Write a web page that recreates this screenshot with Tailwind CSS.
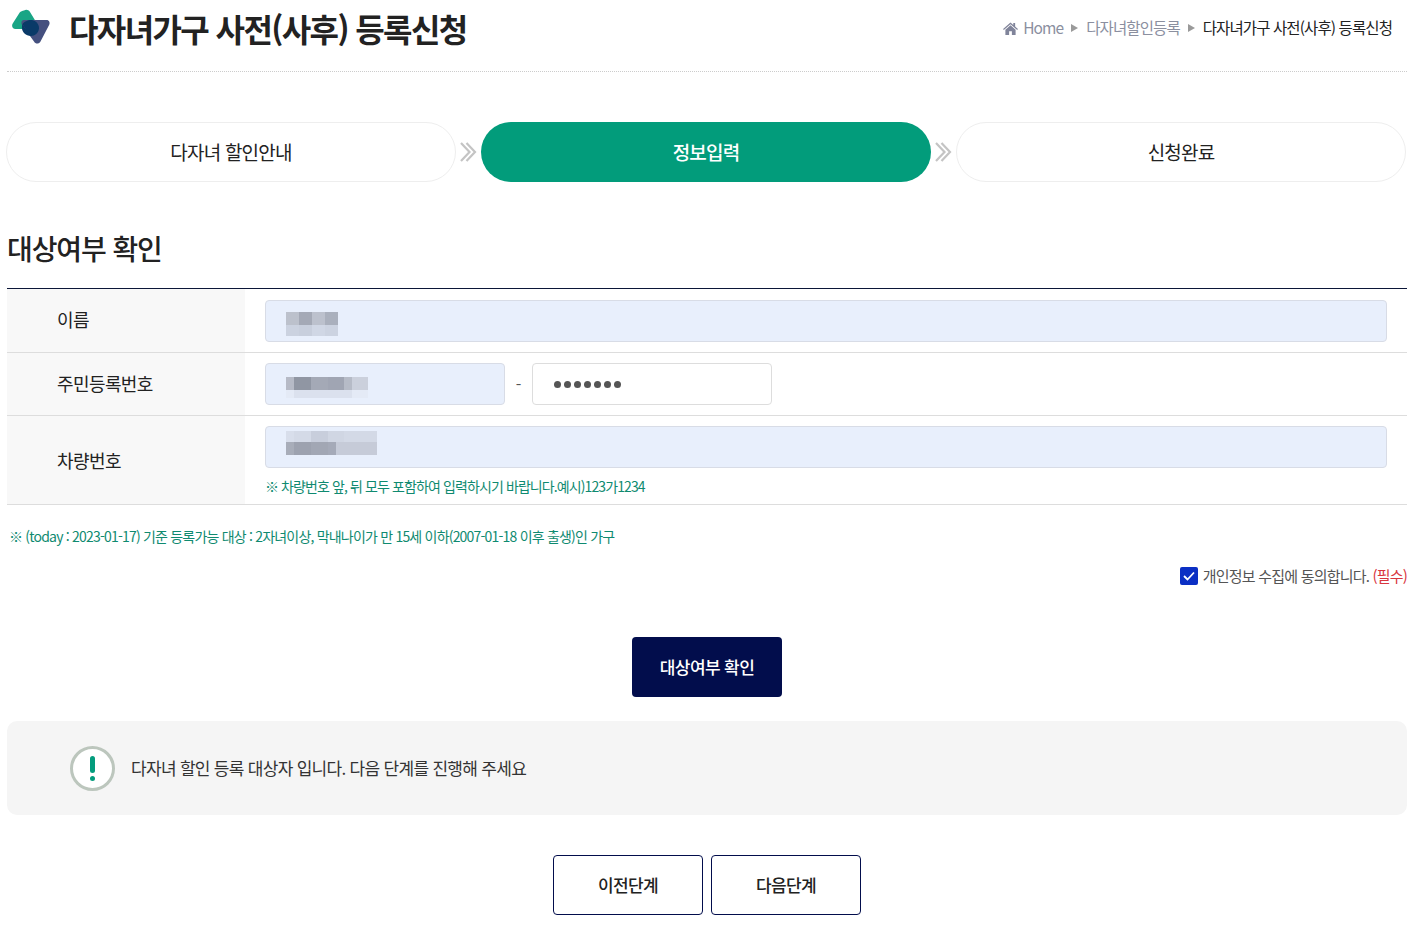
<!DOCTYPE html>
<html lang="ko">
<head>
  <meta charset="utf-8" />
  <title>다자녀가구 사전(사후) 등록신청</title>
  <script src="https://cdn.jsdelivr.net/npm/@tailwindcss/browser@4"></script>
</head>
<body class="bg-white text-[#222] font-['Noto_Sans_CJK_KR','Noto_Sans',sans-serif] overflow-hidden">
  <div class="w-[1414px] h-[926px] overflow-hidden px-[7px]">
    <!-- Header -->
    <header class="h-[72px] border-b border-dotted border-[#ccc] flex items-start justify-between">
      <div class="flex items-center h-[56px]">
        <svg class="ml-[4px] w-[40px] h-[38px]" viewBox="0 0 40 38">
          <path d="M13 1.5c2-1.6 4.5-.8 5.700 1l7 11.500c1.700 3 .3 6-3.200 6H4.500C1.500 20 .3 17 1.700 14.500l7-11c1-1.200 2.800-1.500 4.300-2z" fill="#19a585"/>
          <path d="M13 11h22.500c2.800 0 3.800 2.800 2.600 5l-8.600 16.500c-1.600 2.800-5 2.800-6.500 0l-12-16.500C9.800 13.500 10.500 11 13 11z" fill="#45507f"/>
          <path d="M21 11c4 .7 7 4 7 8 0 .4 0 .7-.1 1H14.500L11.500 15c1.500-2.400 6-4.500 9.500-4z" fill="#0a3a68"/>
          <path d="M11.500 15l3 5h13.400c-.5 4.100-4 7-8 7-5 0-9-4-9-8.500 0-1.300.2-2.500.6-3.500z" fill="#0a3a68"/>
        </svg>
        <h1 class="ml-[18px] text-[32px] leading-[56px] font-bold tracking-[-1.6px] text-[#222]">다자녀가구 사전(사후) 등록신청</h1>
      </div>
      <nav class="flex items-center h-[56px] pr-[15px] text-[15.500px] tracking-[-0.9px] text-[#8b8f9f]">
        <svg class="w-[15px] h-[13px] mr-[5px]" viewBox="0 0 16 14" fill="#80849a">
          <path d="M8 0.500 0 7.500l.8 1L8 2.300l7.200 6.200.8-1-3-2.600V1h-2v2.200z"/>
          <path d="M8 3.500 2.500 8.300V14h4v-4h3v4h4V8.300z"/>
        </svg>
        <span>Home</span>
        <span class="mx-[8px] w-0 h-0 border-y-[4px] border-y-transparent border-l-[7px] border-l-[#9a9a9a]"></span>
        <span>다자녀할인등록</span>
        <span class="mx-[8px] w-0 h-0 border-y-[4px] border-y-transparent border-l-[7px] border-l-[#9a9a9a]"></span>
        <span class="text-[#222]">다자녀가구 사전(사후) 등록신청</span>
      </nav>
    </header>

    <!-- Steps -->
    <div class="mt-[50px] -ml-px flex w-[1400px] items-center">
      <div class="w-[450px] h-[60px] rounded-[30px] border border-[#eee] flex items-center justify-center text-[19px] tracking-[-0.8px] text-[#222]">다자녀 할인안내</div>
      <svg class="w-[25px] h-[20px]" viewBox="0 0 25 20" fill="none" stroke="#c4c4c4" stroke-width="2.200"><path d="M5 1l8.500 9L5 19"/><path d="M10.500 1 19 10l-8.500 9"/></svg>
      <div class="w-[450px] h-[60px] rounded-[30px] bg-[#029c7b] flex items-center justify-center text-[19px] font-medium tracking-[-0.8px] text-white">정보입력</div>
      <svg class="w-[25px] h-[20px]" viewBox="0 0 25 20" fill="none" stroke="#c4c4c4" stroke-width="2.200"><path d="M5 1l8.500 9L5 19"/><path d="M10.500 1 19 10l-8.500 9"/></svg>
      <div class="w-[450px] h-[60px] rounded-[30px] border border-[#eee] flex items-center justify-center text-[19px] tracking-[-0.8px] text-[#222]">신청완료</div>
    </div>

    <h2 class="mt-[44px] text-[28px] leading-[44px] font-medium tracking-[-1.100px] text-[#222]">대상여부 확인</h2>

    <!-- Form table -->
    <div class="mt-[18px] w-[1400px] border-t border-[#0b1638]">
      <div class="flex h-[64px] border-b border-[#ddd]">
        <div class="w-[238px] bg-[#f8f8f8] pl-[50px] flex items-center text-[18px] tracking-[-0.6px] text-[#222] pb-[2px]">이름</div>
        <div class="flex-1 pl-[20px] pr-[20px] pt-[11px]">
          <div class="h-[42px] rounded-[4px] border border-[#d8dce6] bg-[#e8effc] pl-[20px] pt-[11px]">
            <div class="grid grid-cols-[13px_13px_13px_13px] grid-rows-[13px_11px] w-[52px]">
              <div class="bg-[#bcc1cc]"></div><div class="bg-[#a4a9b6]"></div><div class="bg-[#bcc1cd]"></div><div class="bg-[#aab0bd]"></div>
              <div class="bg-[#cbd2e0]"></div><div class="bg-[#c8cfdd]"></div><div class="bg-[#d0d7e5]"></div><div class="bg-[#ccd3e1]"></div>
            </div>
          </div>
        </div>
      </div>
      <div class="flex h-[63px] border-b border-[#ddd]">
        <div class="w-[238px] bg-[#f8f8f8] pl-[50px] flex items-center text-[18px] tracking-[-0.6px] text-[#222] pb-[2px]">주민등록번호</div>
        <div class="flex-1 pl-[20px] pt-[10px] flex items-start">
          <div class="w-[240px] h-[42px] rounded-[4px] border border-[#d8dce6] bg-[#e8effc] pl-[20px] pt-[13px]">
            <div class="grid grid-cols-[8px_9px_8px_9px_8px_8px_8px_8px_8px_8px] grid-rows-[13px_8px] w-[78px]">
              <div class="bg-[#b6bac6]"></div><div class="bg-[#9096a3]"></div><div class="bg-[#9096a3]"></div><div class="bg-[#a4a9b6]"></div><div class="bg-[#a4a9b6]"></div><div class="bg-[#a0a5b3]"></div><div class="bg-[#a0a5b3]"></div><div class="bg-[#b6bbc7]"></div><div class="bg-[#cbd0dc]"></div><div class="bg-[#cbd0dc]"></div>
              <div class="bg-[#e4eaf6]"></div><div class="bg-[#dbe1ee]"></div><div class="bg-[#dbe1ee]"></div><div class="bg-[#dbe1ee]"></div><div class="bg-[#dbe1ee]"></div><div class="bg-[#dbe1ee]"></div><div class="bg-[#dbe1ee]"></div><div class="bg-[#dbe1ee]"></div><div class="bg-[#e4eaf6]"></div><div class="bg-[#e4eaf6]"></div>
            </div>
          </div>
          <span class="w-[27px] h-[42px] flex items-center justify-center text-[16px] text-[#555]">-</span>
          <div class="w-[240px] h-[42px] rounded-[4px] border border-[#ddd] bg-white pl-[21px] flex items-center gap-[3px]">
            <i class="w-[7px] h-[7px] rounded-full bg-[#555]"></i><i class="w-[7px] h-[7px] rounded-full bg-[#555]"></i><i class="w-[7px] h-[7px] rounded-full bg-[#555]"></i><i class="w-[7px] h-[7px] rounded-full bg-[#555]"></i><i class="w-[7px] h-[7px] rounded-full bg-[#555]"></i><i class="w-[7px] h-[7px] rounded-full bg-[#555]"></i><i class="w-[7px] h-[7px] rounded-full bg-[#555]"></i>
          </div>
        </div>
      </div>
      <div class="flex h-[89px] border-b border-[#ddd]">
        <div class="w-[238px] bg-[#f8f8f8] pl-[50px] flex items-center text-[18px] tracking-[-0.6px] text-[#222]">차량번호</div>
        <div class="flex-1 pl-[20px] pr-[20px] pt-[10px]">
          <div class="h-[42px] rounded-[4px] border border-[#d8dce6] bg-[#e8effc] pl-[20px] pt-[4px]">
            <div class="grid grid-cols-[8px_9px_8px_9px_8px_8px_8px_8px_8px_8px_9px] grid-rows-[11px_13px] w-[91px]">
              <div class="bg-[#d8deeb]"></div><div class="bg-[#d4dae7]"></div><div class="bg-[#d4dae7]"></div><div class="bg-[#c8cedc]"></div><div class="bg-[#c8cedc]"></div><div class="bg-[#d0d6e3]"></div><div class="bg-[#d0d6e3]"></div><div class="bg-[#d3d9e6]"></div><div class="bg-[#d3d9e6]"></div><div class="bg-[#d3d9e6]"></div><div class="bg-[#d3d9e6]"></div>
              <div class="bg-[#a8adb9]"></div><div class="bg-[#9da2af]"></div><div class="bg-[#9da2af]"></div><div class="bg-[#a2a7b4]"></div><div class="bg-[#a2a7b4]"></div><div class="bg-[#a5aab8]"></div><div class="bg-[#c6cbd8]"></div><div class="bg-[#c6cbd8]"></div><div class="bg-[#c6cbd8]"></div><div class="bg-[#c6cbd8]"></div><div class="bg-[#c6cbd8]"></div>
            </div>
          </div>
          <p class="mt-[8px] text-[14px] leading-[20px] tracking-[-0.9px] text-[#0f8a70]">※ 차량번호 앞, 뒤 모두 포함하여 입력하시기 바랍니다.예시)123가1234</p>
        </div>
      </div>
    </div>

    <p class="mt-[20px] pl-[2px] text-[14px] leading-[22px] tracking-[-0.8px] text-[#0f8a70]">※ (today : 2023-01-17) 기준 등록가능 대상 : 2자녀이상, 막내나이가 만 15세 이하(2007-01-18 이후 출생)인 가구</p>

    <div class="mt-[18px] w-[1400px] flex items-center justify-end text-[15px] leading-[22px] tracking-[-0.8px] text-[#555]">
      <span class="w-[18px] h-[18px] rounded-[2px] bg-[#0b2fc4] flex items-center justify-center mr-[5px]">
        <svg class="w-[12px] h-[10px]" viewBox="0 0 12 10" fill="none" stroke="#fff" stroke-width="1.800"><path d="M1 5l3.500 3.500L11 1.500"/></svg>
      </span>
      <span>개인정보 수집에 동의합니다.&nbsp;</span><span class="text-[#d9363e]">(필수)</span>
    </div>

    <div class="mt-[50px] w-[1400px] flex justify-center">
      <button class="w-[150px] h-[60px] rounded-[4px] bg-[#020d4c] text-white text-[17px] font-medium tracking-[-0.6px]">대상여부 확인</button>
    </div>

    <div class="mt-[24px] w-[1400px] h-[94px] rounded-[10px] bg-[#f5f5f5] flex items-center pl-[63px]">
      <span class="w-[45px] h-[45px] rounded-full border-[3px] border-[#bcc6bd] bg-white flex flex-col items-center justify-center gap-[3px]">
        <i class="w-[5px] h-[17px] rounded-[3px] bg-[#049c7d]"></i>
        <i class="w-[5px] h-[5px] rounded-full bg-[#049c7d]"></i>
      </span>
      <p class="ml-[16px] text-[17px] tracking-[-0.7px] text-[#333]">다자녀 할인 등록 대상자 입니다. 다음 단계를 진행해 주세요</p>
    </div>

    <div class="mt-[40px] w-[1400px] flex justify-center gap-[8px]">
      <button class="w-[150px] h-[60px] rounded-[4px] border border-[#020d4c] bg-white text-[17px] font-medium tracking-[-0.6px] text-[#222]">이전단계</button>
      <button class="w-[150px] h-[60px] rounded-[4px] border border-[#020d4c] bg-white text-[17px] font-medium tracking-[-0.6px] text-[#222]">다음단계</button>
    </div>
  </div>
</body>
</html>
